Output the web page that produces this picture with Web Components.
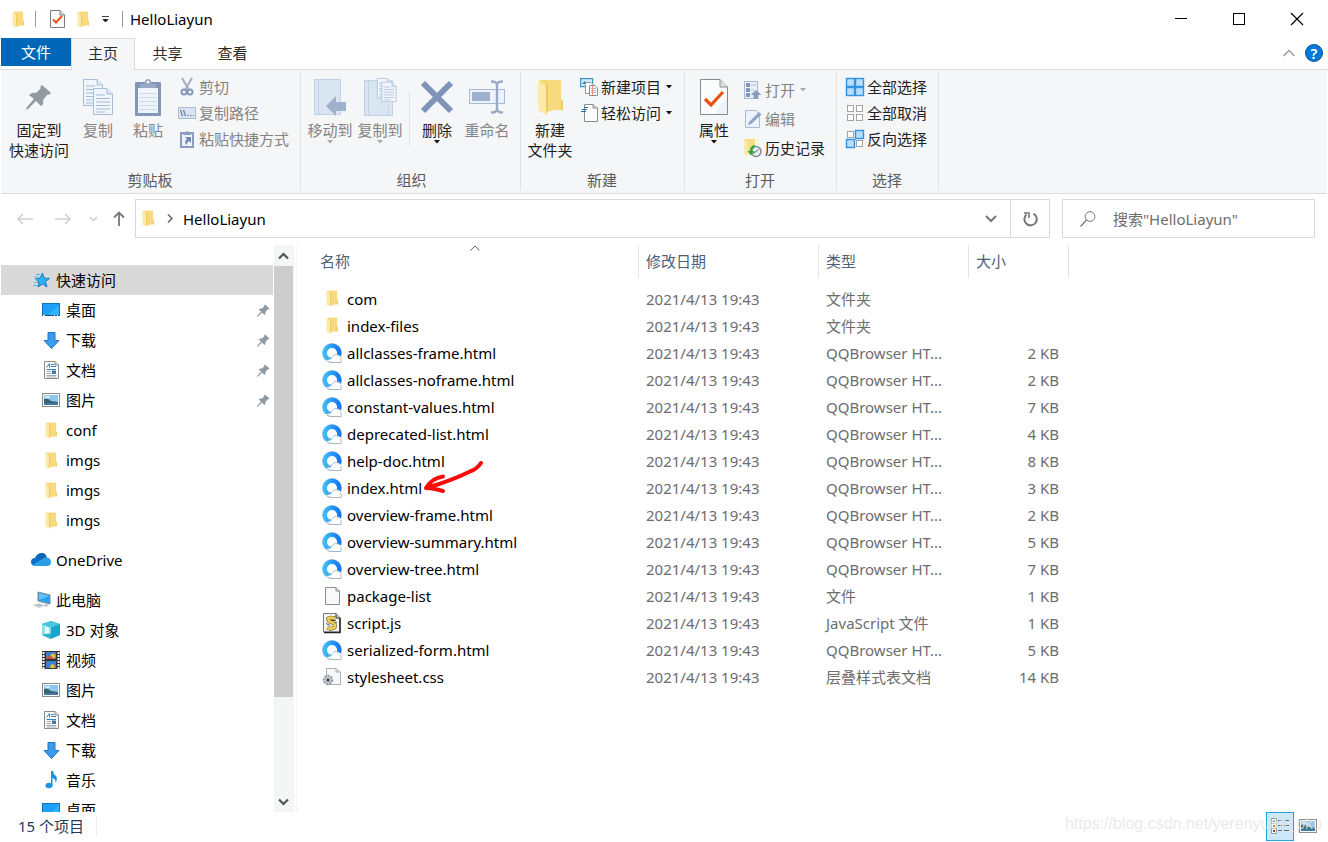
<!DOCTYPE html>
<html lang="zh-CN">
<head>
<meta charset="utf-8">
<title>HelloLiayun</title>
<style>
  html, body { margin: 0; height: 100%; background: #fff; }
  body { font: 15px/20px "Noto Sans", "Noto Sans CJK SC", sans-serif; color: #000; overflow: hidden; }
</style>
</head>
<body>
<explorer-window></explorer-window>

<script>
const folder = (w, h) => `<svg width="${w}" height="${h}" viewBox="0 0 26 36"><path d="M3 1H24V27H25V31H3Z" fill="#f7d774"/><path d="M11 1H24V29L11 33Z" fill="#f8da7e"/><path d="M1 1L9 7V36L1 31Z" fill="#fde9a9"/><path d="M9 7L11 5V31L9 36Z" fill="#eec75c"/><path d="M24 20L26 22V31H24Z" fill="#f2cd66"/></svg>`;
const tri = c => `<svg width="8" height="4" viewBox="0 0 8 4"><path d="M1 0H7L4 3.6Z" fill="${c}"/></svg>`;
const pin = s => `<svg width="${s}" height="${s}" viewBox="0 0 26 26"><path d="M16 1L25 9L23 11L22 10L17 16Q18 20 15 22L10 17L2 25L0 26L1 23L8 15L3 11Q6 8 10 9L15 4L14 3Z" fill="#8f9aa2"/></svg>`;
const sheet = (x, y) => `<g transform="translate(${x} ${y})"><path d="M.5 .5H14L19.5 6V26.500H.5Z" fill="#f1f6fc" stroke="#a9bdd8"/><path d="M14 .5V6H19.5" fill="#dbe6f4" stroke="#a9bdd8"/><path d="M3 7H12M3 10.500H17M3 14H17M3 17.500H17M3 21H17M3 24H12" stroke="#a5b9d4"/></g>`;
const cell = (x, y, on) => on
  ? `<rect x="${x + .5}" y="${y + .5}" width="8" height="8" fill="#b9def9" stroke="#2f93e3" stroke-width="1.4"/>`
  : `<rect x="${x + 1.5}" y="${y + 1.5}" width="6" height="6" fill="#fff" stroke="#a3a3a3"/>`;
const grid = s => `<svg width="18" height="18" viewBox="0 0 18 18">${cell(0, 0, s[0])}${cell(9, 0, s[1])}${cell(0, 9, s[2])}${cell(9, 9, s[3])}</svg>`;

const ICONS = {
  folder: folder(12, 17),
  folderBig: folder(26, 36),
  pinBig: pin(26),
  pin: pin(13),
  caret: tri('#111'),
  caretOff: tri('#a9a9a9'),
  props: `<svg width="15" height="18" viewBox="0 0 15 18"><path d="M.5 .5H10L14.500 5V17.500H.5Z" fill="#f8f9fb" stroke="#7d7d7d"/><path d="M10 .5V5H14.500" fill="#ddd" stroke="#7d7d7d"/><path d="M3 9.500L6 12.500L12 6" fill="none" stroke="#e8510f" stroke-width="2"/></svg>`,
  propsBig: `<svg width="28" height="36" viewBox="0 0 28 36"><path d="M.5 .5H20L27.500 8V35.500H.5Z" fill="#fbfcfe" stroke="#8a8a8a"/><path d="M20 .5V8H27.500" fill="#e1e1e1" stroke="#8a8a8a"/><path d="M14 35L27 19V35Z" fill="#eef3f9"/><path d="M5 20L11 26L23 13" fill="none" stroke="#e8510f" stroke-width="3.200"/></svg>`,
  custom: `<svg width="9" height="7" viewBox="0 0 9 7"><path d="M1 .5H8M2 3.500H7L4.500 6Z" fill="#111" stroke="#111" stroke-width=".8"/></svg>`,
  min: `<svg width="12" height="12" viewBox="0 0 12 12"><path d="M0 5.500H12" stroke="#000"/></svg>`,
  max: `<svg width="12" height="12" viewBox="0 0 12 12"><rect x=".5" y=".5" width="11" height="11" fill="none" stroke="#000"/></svg>`,
  close: `<svg width="12" height="12" viewBox="0 0 12 12"><path d="M0 0L12 12M12 0L0 12" stroke="#000" stroke-width="1.200"/></svg>`,
  collapse: `<svg width="12" height="8" viewBox="0 0 12 8"><path d="M.5 7L6 1.500L11.500 7" fill="none" stroke="#999" stroke-width="1.300"/></svg>`,
  copy: `<svg width="30" height="36" viewBox="0 0 30 36">${sheet(0, 0)}${sheet(10, 9)}</svg>`,
  paste: `<svg width="26" height="37" viewBox="0 0 26 37"><rect y="3" width="26" height="34" rx="1" fill="#8396ba"/><path d="M3 9H23V34H3Z" fill="#eff4fb"/><path d="M4 14.500H22M4 18.500H22M4 22.500H22M4 26.500H22M4 30.500H22" stroke="#cfdbeb"/><path d="M5 9V5H9Q10 0 13 0Q16 0 17 5H21V9Z" fill="#9aa9c3"/><circle cx="13" cy="3" r="1.300" fill="#fff"/></svg>`,
  cut: `<svg width="18" height="18" viewBox="0 0 18 18"><path d="M4 0L11 12M14 0L7 12" stroke="#a2adbf" stroke-width="2"/><circle cx="6" cy="14" r="2.500" fill="none" stroke="#8496b8" stroke-width="2"/><circle cx="12" cy="14" r="2.500" fill="none" stroke="#8496b8" stroke-width="2"/></svg>`,
  copyPath: `<svg width="18" height="12" viewBox="0 0 18 12"><rect x=".5" y=".5" width="17" height="11" fill="#d8e4f2" stroke="#aabbd2"/><path d="M2.500 3L4.500 9M5.500 3L7.500 9M9 8.500H10.500M12 8.500H13.500M15 8.500H16" stroke="#687f9f" stroke-width="1.200"/></svg>`,
  shortcut: `<svg width="14" height="18" viewBox="0 0 14 18"><rect x="1" y="3" width="12" height="14" fill="#eef3fa" stroke="#8a9dc0" stroke-width="2"/><path d="M3 5V3H5Q7-1 9 3H11V5Z" fill="#8a9dc0"/><path d="M5 7H11V13L9 11Q7 12 6.500 15Q3.500 12 7 9Z" fill="#7389b2"/></svg>`,
  moveTo: `<svg width="32" height="37" viewBox="0 0 32 37"><rect x=".5" y=".5" width="26" height="35" fill="#dae5f2" stroke="#c2d2e6"/><path d="M4.500 1V35" stroke="#c2d2e6"/><path d="M12 27L22 17V23H32V32H22V37Z" fill="#a0b1cc"/></svg>`,
  copyTo: `<svg width="33" height="38" viewBox="0 0 33 38"><rect x=".5" y="2.500" width="28" height="35" fill="#dae5f2" stroke="#c2d2e6"/><path d="M4.500 3V37M24.500 37V28" stroke="#c2d2e6"/><g transform="translate(13 0) scale(.75)">${sheet(0, 0)}${sheet(6, 5)}</g></svg>`,
  del: `<svg width="32" height="32" viewBox="0 0 32 32"><path d="M2 2L30 30M30 2L2 30" stroke="#8093b8" stroke-width="6"/></svg>`,
  rename: `<svg width="36" height="34" viewBox="0 0 36 34"><rect x=".5" y="9.500" width="35" height="14" fill="#edf3fb" stroke="#a7b9d3"/><rect x="3" y="12" width="18" height="9" fill="#a0b1ce"/><path d="M22 1.500Q28 1.500 28 5V29Q28 32.500 22 32.500M34 1.500Q28 1.500 28 5M28 29Q28 32.500 34 32.500" fill="none" stroke="#98aac9" stroke-width="2.400"/></svg>`,
  newItem: `<svg width="18" height="18" viewBox="0 0 18 18"><rect x=".6" y=".6" width="12" height="8" fill="#cfeaf8" stroke="#4493bd" stroke-width="1.200"/><path d="M2 6L5 3L7 6Z" fill="#39779b"/><path d="M5.500 4.500H11L13.500 7V15.500H5.500Z" fill="#fff" stroke="#999"/><path d="M9.500 7.500H15L17.500 10V17.500H9.500Z" fill="#fff" stroke="#8c8c8c"/><path d="M11 10.500H16M11 12.500H16M11 14.500H16" stroke="#a3b7cb"/><path d="M12.500 8V17" stroke="#ef8f7c"/></svg>`,
  easy: `<svg width="17" height="18" viewBox="0 0 17 18"><path d="M3.500 .5H12L16.500 4V17.500H3.500Z" fill="#fbfcfe" stroke="#8c8c8c"/><path d="M12 .5V4H16.500" fill="#ddd" stroke="#8c8c8c"/><path d="M3 3.500H7M1 5.500H6M0 7.500H5" stroke="#27719f" stroke-width="1.200"/></svg>`,
  open: `<svg width="18" height="18" viewBox="0 0 18 18"><rect x=".5" y=".5" width="13" height="17" fill="#e9f0f9" stroke="#a7b9d3"/><path d="M2.500 2.500H5.500V5.500H2.500ZM2.500 7.500H5.500V10.500H2.500ZM2.500 12.500H5.500V15.500H2.500Z" fill="#7f94ba" stroke="#7f94ba"/><path d="M7 4H12M7 9H10" stroke="#a9b9d1"/><path d="M12 9L17.500 14H14.500V18H9.500V14H6.500Z" fill="#8a9dbf"/></svg>`,
  edit: `<svg width="17" height="18" viewBox="0 0 17 18"><path d="M.5 .5H11L14.500 4V17.500H.5Z" fill="#edf3fa" stroke="#a7b9d3"/><path d="M3 15L4 12L14 2L16.500 4.500L6 14Z" fill="#8fa3c5"/></svg>`,
  history: `<svg width="18" height="18" viewBox="0 0 18 18"><path d="M0 0H11V15H0Z" fill="#f8dc82"/><path d="M0 0L4 3V18L0 15Z" fill="#fdeaae"/><circle cx="12" cy="12.500" r="5" fill="#e9eef0" stroke="#858c8d" stroke-width="1.500"/><path d="M9 14.500L12 12.500L14.500 10.500" stroke="#666" fill="none"/><path d="M11 6Q6 6.500 6 12H3.500L7 16.500L10.500 12H8.500Q9 8.500 11 8.500Z" fill="#2fa84a"/></svg>`,
  selAll: grid([1, 1, 1, 1]), selNone: grid([0, 0, 0, 0]), selInv: grid([0, 1, 1, 0]),
  back: `<svg width="16" height="12" viewBox="0 0 16 12"><path d="M1 6H16M6 1L1 6L6 11" fill="none" stroke="#cfcfcf" stroke-width="1.500"/></svg>`,
  fwd: `<svg width="16" height="12" viewBox="0 0 16 12"><path d="M0 6H15M10 1L15 6L10 11" fill="none" stroke="#cfcfcf" stroke-width="1.500"/></svg>`,
  recent: `<svg width="9" height="6" viewBox="0 0 9 6"><path d="M1 1L4.500 4.500L8 1" fill="none" stroke="#cfcfcf" stroke-width="1.500"/></svg>`,
  up: `<svg width="12" height="15" viewBox="0 0 12 15"><path d="M6 15V1.500M1 6.500L6 1.500L11 6.500" fill="none" stroke="#777" stroke-width="1.800"/></svg>`,
  crumb: `<svg width="6" height="9" viewBox="0 0 6 9"><path d="M1 .5L5 4.500L1 8.500" fill="none" stroke="#666" stroke-width="1.500"/></svg>`,
  down: `<svg width="12" height="8" viewBox="0 0 12 8"><path d="M1 1L6 6L11 1" fill="none" stroke="#777" stroke-width="2"/></svg>`,
  refresh: `<svg width="15" height="16" viewBox="0 0 15 16"><path d="M10.500 2.700A6.200 6.200 0 1 1 3.500 3.500" fill="none" stroke="#777" stroke-width="2"/><path d="M1 2H6V7" fill="none" stroke="#777" stroke-width="1.600"/></svg>`,
  search: `<svg width="16" height="16" viewBox="0 0 16 16"><circle cx="10" cy="5.500" r="4.900" fill="none" stroke="#777"/><path d="M6.500 9L.5 15.500" stroke="#777" stroke-width="1.200"/></svg>`,
  star: `<svg width="20" height="18" viewBox="0 0 20 18"><path d="M11.500 2L13 7L18.500 7.500L14.500 10.500L16 16L11.500 13L7 16L8 11L4.500 8L9 7Z" fill="#2fb1f2" stroke="#1679c4"/><path d="M5 3.500H9M3 6H7M4 8.500H6M3 11.500H7M2 14.500H6" stroke="#4db5ee"/></svg>`,
  cloud: `<svg width="20" height="14" viewBox="0 0 20 14"><path d="M4 5Q6 0 11 0Q15 0 16 5L12 9L4 7Z" fill="#0a66b7"/><path d="M4 13Q0 12 0 9Q0 5 4 5Q7 4 10 8L8 13Z" fill="#0f6fc6"/><path d="M15 4Q20 5 20 9Q20 13 16 13H5Q1 13 3 11L12 5.500Q13 4 15 4Z" fill="#2a9fe8"/></svg>`,
  pc: `<svg width="20" height="18" viewBox="0 0 20 18"><path d="M7 1L19 4V13L7 10Z" fill="#2aa2ef" stroke="#7d8a94"/><path d="M8 2L18 5L8 9Z" fill="#67c1f6"/><path d="M1 14L8 12L15 14.500L8 17Z" fill="#d4dadf"/><path d="M3 14.500L8 13L12 14.500L8 16Z" fill="#b9c2c9"/><path d="M13 13L18 14L15 16Z" fill="#b1bac0"/></svg>`,
  desktop: `<svg width="18" height="14" viewBox="0 0 18 14"><rect x=".5" y=".5" width="17" height="12" fill="#1ba1f7" stroke="#0d75c0"/><path d="M6 12L17 2V12Z" fill="#35b0fa"/><path d="M0 12.500H18" stroke="#09558f"/><path d="M1 12.500H3M12 12.500H13M15 12.500H16" stroke="#fff"/></svg>`,
  download: `<svg width="17" height="17" viewBox="0 0 17 17"><path d="M5 .5H12V8.500H16L8.500 16.500L1 8.500H5Z" fill="#3b9bea" stroke="#1f77c4"/></svg>`,
  doc: `<svg width="15" height="18" viewBox="0 0 15 18"><path d="M.5 .5H11L14.500 4V17.500H.5Z" fill="#fdfdfd" stroke="#8b8b8b"/><path d="M11 .5V4H14.500" fill="#ddd" stroke="#8b8b8b"/><path d="M2.500 6.500L5.500 2.500V6.500M7 3.500H10M7 5.500H12M2.500 8.500H12" fill="none" stroke="#2a84c8"/><path d="M2.500 10.500H7M2.500 12.500H7M2.500 14.500H12.500M2.500 16H12.500" stroke="#a2aab2"/><rect x="8" y="9.500" width="4" height="3.500" fill="#3b79a8"/></svg>`,
  picture: `<svg width="18" height="14" viewBox="0 0 18 14"><rect x=".5" y=".5" width="17" height="13" fill="#fff" stroke="#8d8d8d"/><rect x="2" y="2" width="14" height="10" fill="#8dc6ee"/><path d="M2 6Q6 5 9 8L16 9V12H2Z" fill="#39636b"/><path d="M2 10H16V12H2Z" fill="#3e78a8"/><path d="M3 4H8" stroke="#e9f6fd" stroke-width="1.500"/></svg>`,
  cube: `<svg width="18" height="18" viewBox="0 0 18 18"><path d="M9 0L18 3V14L9 18L0 14V3Z" fill="#18a5cf"/><path d="M9 6.500L0 3V14L9 18Z" fill="#8fe0ee"/><path d="M3 5L7 6.500V14L3 13Z" fill="#e6fafd"/><path d="M3 13L9 12.500V18L0 14Z" fill="#2db4cd"/><path d="M9 0L18 3L9 6.500L0 3Z" fill="#4cc6de"/></svg>`,
  video: `<svg width="18" height="18" viewBox="0 0 18 18"><rect width="18" height="18" fill="#333"/><path d="M1.500 1V18M16.500 1V18" stroke="#fff" stroke-width="2" stroke-dasharray="2 1"/><rect x="4" y="1" width="10" height="7" fill="#3a7fd6"/><rect x="4" y="10" width="10" height="7" fill="#3a7fd6"/><circle cx="11" cy="5" r="2.500" fill="#e8bb36"/><path d="M4 6L9 5L12 8H4Z" fill="#cc5338"/><path d="M8 17Q8 13 11 13Q13 14 13 17Z" fill="#e8bb36"/></svg>`,
  music: `<svg width="13" height="18" viewBox="0 0 13 18"><ellipse cx="4" cy="14.500" rx="3.500" ry="2.800" fill="#1795ec"/><path d="M6 15V0H8Q8 3 11 5Q13 8 10.500 12Q11 8 7.500 7V15Z" fill="#1795ec"/></svg>`,
  qq: `<svg width="20" height="20" viewBox="0 0 20 20"><defs><linearGradient id="g" x1="0" x2="1"><stop offset="0" stop-color="#3cbcf6"/><stop offset="1" stop-color="#1478f2"/></linearGradient></defs><circle cx="10" cy="10" r="9.600" fill="#fff" stroke="#b3c6da" stroke-width=".8"/><circle cx="10" cy="10" r="7.300" fill="#fff" stroke="url(#g)" stroke-width="4.400"/><path d="M4 17Q8 17.500 10.500 14.500Q12 11.500 14.500 11.500Q18 11.500 19.500 15V19.500H9Q5.500 19 4 17Z" fill="#fff"/><path d="M6 15Q9 15.500 10.500 13.500Q12 11 14.500 11.500Q16 12 16.500 13.500" fill="none" stroke="#9fb4cc" stroke-width=".9"/><path d="M5 18Q8 19.500 10 19.500H19Q20 17.500 18.500 15" fill="none" stroke="#9dafc5" stroke-width=".9"/></svg>`,
  file: `<svg width="15" height="18" viewBox="0 0 15 18"><path d="M.5 .5H11L14.500 4V17.500H.5Z" fill="#f7f9fb" stroke="#8b8b8b"/><path d="M11 .5V4H14.500" fill="#ddd" stroke="#8b8b8b"/></svg>`,
  js: `<svg width="18" height="20" viewBox="0 0 18 20"><path d="M.5 .5H13L17 4.500V19H.5Z" fill="#f6f6f4" stroke="#777"/><path d="M17 5V19.500H1" fill="none" stroke="#222" stroke-width="1.500"/><path d="M13 .5V5H17" fill="#ccc" stroke="#333"/><path d="M12.500 5.500Q6 3.500 5 6Q5 8.500 9 9.500Q13 11 11.500 14.500Q8 16.500 4 15" fill="none" stroke="#716129" stroke-width="4"/><path d="M12.500 5.500Q6 3.500 5 6Q5 8.500 9 9.500Q13 11 11.500 14.500Q8 16.500 4 15" fill="none" stroke="#edcf58" stroke-width="2.800"/><path d="M8 7.500H13M3 10.500L7 12.500M12 9.500H14" stroke="#333" stroke-width=".8"/></svg>`,
  css: `<svg width="18" height="18" viewBox="0 0 18 18"><path d="M3.500 .5H13L17.500 4V16.500H3.500Z" fill="#f5f7f9" stroke="#b0b0b0"/><path d="M13 .5V4H17.500" fill="#ddd" stroke="#b0b0b0"/><circle cx="5" cy="12" r="4.300" fill="#c0c6cb" stroke="#929aa1" stroke-width="1.800" stroke-dasharray="2 1.200"/><circle cx="5" cy="12" r="1.500" fill="#333c44"/></svg>`,
  sort: `<svg width="10" height="6" viewBox="0 0 10 6"><path d="M.5 5.500L5 1L9.500 5.500" fill="none" stroke="#666"/></svg>`,
  scrollUp: `<svg width="11" height="8" viewBox="0 0 11 8"><path d="M1 6.500L5.500 2L10 6.500" fill="none" stroke="#555" stroke-width="2.200"/></svg>`,
  scrollDown: `<svg width="11" height="8" viewBox="0 0 11 8"><path d="M1 1.500L5.500 6L10 1.500" fill="none" stroke="#555" stroke-width="2.200"/></svg>`,
  details: `<svg width="18" height="16" viewBox="0 0 18 16"><path d="M.5 .5H5.500V15.500H.5ZM.5 5.500H5.500M.5 10.500H5.500" fill="#fff" stroke="#999"/><path d="M2 3H4" stroke="#2f6fa8" stroke-width="2"/><path d="M2 8H4" stroke="#c6922c" stroke-width="2"/><path d="M2 13H4" stroke="#b5342a" stroke-width="2"/><path d="M7 2.500H11M13 2.500H18M7 7.500H11M13 7.500H18M7 12.500H11M13 12.500H18" stroke="#666"/></svg>`,
  mark: `<svg width="60" height="34" viewBox="0 0 60 34"><path d="M58 3Q54 9 48 11Q28 21 3 28Q9 18 20 16.500M3 28Q10 28 20 31" fill="none" stroke="#fb0a0a" stroke-width="4" stroke-linecap="round" stroke-linejoin="round"/></svg>`
};

const define = (name, css, render) => customElements.define(name, class extends HTMLElement {
  connectedCallback() {
    if (this.shadowRoot) return;
    const t = document.createElement('template');
    t.innerHTML = `<style>*{box-sizing:border-box}button{font:inherit;color:inherit;background:none;border:0;margin:0;padding:0;display:flex;align-items:center;justify-content:center}a{color:inherit;text-decoration:none}${css}</style>${render(this)}`;
    this.attachShadow({ mode: 'open' }).append(t.content.cloneNode(true));
  }
});
const icon = n => `<ui-icon name="${n}"></ui-icon>`;

define('ui-icon', `:host{display:inline-flex;flex:none;align-items:center;justify-content:center}svg{display:block;overflow:visible}`,
  el => ICONS[el.getAttribute('name')]);

define('title-bar', `
  :host{display:flex;align-items:center;height:38px;padding:0 2px 0 12px}
  .sep{width:1px;height:16px;background:#999}
  .quick{display:flex;align-items:center;gap:12px}
  .quick .sep{margin:0 2px 0 -1px}
  h1{font:inherit;margin:0 0 0 7px;flex:1}
  .end{margin-left:12px}
  .win{width:58px;height:38px}`,
  () => `<div class="quick">${icon('folder')}<span class="sep"></span>
    <button aria-label="属性">${icon('props')}</button><button aria-label="新建文件夹">${icon('folder')}</button>
    <button aria-label="自定义快速访问工具栏">${icon('custom')}</button></div><span class="sep end"></span>
    <h1>HelloLiayun</h1>
    <button class="win" aria-label="最小化">${icon('min')}</button><button class="win" aria-label="最大化">${icon('max')}</button><button class="win" aria-label="关闭">${icon('close')}</button>`);

define('ribbon-tabs', `
  :host{display:flex;height:32px;padding:0 5px 0 1px;border-bottom:1px solid #dadbdc;color:#2b2b2b}
  button{width:65px;height:30px}
  .file{width:70px;height:28px;background:#0066b8;color:#fff}
  .on{width:64px;height:32px;background:#f5f6f7;border:1px solid #dadbdc;border-bottom:0;padding-bottom:3px}
  .space{flex:1}
  .tool{width:24px}
  .help{width:18px;height:18px;border-radius:9px;background:#0078d7;border:1px solid #0a569b;color:#fff;font-weight:600;line-height:16px;margin:6px 0 0 4px}`,
  () => `<button class="file">文件</button><button class="on">主页</button><button>共享</button><button>查看</button>
    <span class="space"></span><button class="tool" aria-label="最小化功能区">${icon('collapse')}</button><button class="help">?</button>`);

define('ribbon-button', `
  :host{display:block;flex:none;width:50px;color:#1e1e1e}
  :host([wide]){width:68px}
  :host([off]){color:#838383}
  button{flex-direction:column;width:100%;white-space:nowrap}
  .pic{height:42px;margin-bottom:2px}
  .arrow{height:4px}`,
  el => `<button ${el.hasAttribute('off') ? 'disabled' : ''}><ui-icon class="pic" name="${el.getAttribute('icon')}"></ui-icon><slot></slot>${
    el.hasAttribute('menu') ? `<ui-icon class="arrow" name="${el.hasAttribute('off') ? 'caretOff' : 'caret'}"></ui-icon>` : ''}</button>`);

define('ribbon-item', `
  :host{display:block;height:var(--row,26px);color:#1e1e1e}
  :host([off]){color:#838383}
  button{height:100%;white-space:nowrap}
  .pic{width:18px;margin-right:3px}
  .arrow{margin-left:4px}`,
  el => `<button ${el.hasAttribute('off') ? 'disabled' : ''}><ui-icon class="pic" name="${el.getAttribute('icon')}"></ui-icon><slot></slot>${
    el.hasAttribute('menu') ? `<ui-icon class="arrow" name="${el.hasAttribute('off') ? 'caretOff' : 'caret'}"></ui-icon>` : ''}</button>`);

define('ribbon-group', `
  :host{display:flex;flex-direction:column;flex:none;padding:4px 11px 0 4px;margin:2px 0 3px;border-right:1px solid #e1e2e4}
  :host([tight]){padding-right:8px}
  .body{display:flex;flex:1}
  ::slotted(.items){padding-left:5px}
  .name{text-align:center;color:#5a5a5a;padding-left:6px}`,
  el => `<div class="body"><slot></slot></div><div class="name">${el.getAttribute('label')}</div>`);

define('ribbon-bar', `
  :host{display:flex;height:124px;margin:0 1px;background:#f5f6f7;border-bottom:1px solid #dadbdc}
  .items{margin-top:-2px}
  .loose{--row:29px;padding-top:1px}
  .sep{width:1px;height:55px;background:#e1e2e4;margin:15px 2px 0 4px}`,
  () => `
  <ribbon-group label="剪贴板"><ribbon-button wide icon="pinBig"><span>固定到<br>快速访问</span></ribbon-button>
    <ribbon-button off icon="copy">复制</ribbon-button><ribbon-button off icon="paste">粘贴</ribbon-button>
    <div class="items"><ribbon-item off icon="cut">剪切</ribbon-item><ribbon-item off icon="copyPath">复制路径</ribbon-item><ribbon-item off icon="shortcut">粘贴快捷方式</ribbon-item></div></ribbon-group>
  <ribbon-group tight label="组织"><ribbon-button off menu icon="moveTo">移动到</ribbon-button><ribbon-button off menu icon="copyTo">复制到</ribbon-button>
    <span class="sep"></span><ribbon-button menu icon="del">删除</ribbon-button><ribbon-button off icon="rename">重命名</ribbon-button></ribbon-group>
  <ribbon-group label="新建"><ribbon-button icon="folderBig"><span>新建<br>文件夹</span></ribbon-button>
    <div class="items"><ribbon-item menu icon="newItem">新建项目</ribbon-item><ribbon-item menu icon="easy">轻松访问</ribbon-item></div></ribbon-group>
  <ribbon-group label="打开"><ribbon-button menu icon="propsBig">属性</ribbon-button>
    <div class="items loose"><ribbon-item off menu icon="open">打开</ribbon-item><ribbon-item off icon="edit">编辑</ribbon-item><ribbon-item icon="history">历史记录</ribbon-item></div></ribbon-group>
  <ribbon-group label="选择"><div class="items"><ribbon-item icon="selAll">全部选择</ribbon-item><ribbon-item icon="selNone">全部取消</ribbon-item><ribbon-item icon="selInv">反向选择</ribbon-item></div></ribbon-group>`);

define('address-bar', `
  :host{display:flex;align-items:center;height:51px;padding:0 13px 2px 17px}
  .nav{display:flex;align-items:center;gap:22px;width:118px}
  .nav .tight{margin:0 -7px 0 -4px}
  .path{display:flex;align-items:center;flex:1;height:39px;border:1px solid #d9d9d9;padding-left:6px}
  .crumb{margin:0 10px 0 13px}
  .name{flex:1;justify-content:flex-start}
  .box{width:39px;height:37px}
  .refresh{border-left:1px solid #d9d9d9}
  label{display:flex;align-items:center;width:253px;height:39px;border:1px solid #d9d9d9;margin-left:12px;padding-left:17px;gap:17px}
  input{font:inherit;border:0;outline:0;padding:0;min-width:0;flex:1;background:none;color:#000}
  input::placeholder{color:#6d6d6d;opacity:1}`,
  () => `<div class="nav"><button aria-label="后退">${icon('back')}</button><button aria-label="前进">${icon('fwd')}</button><button class="tight" aria-label="最近浏览的位置">${icon('recent')}</button><button aria-label="向上">${icon('up')}</button></div>
    <div class="path">${icon('folder')}<ui-icon class="crumb" name="crumb"></ui-icon><button class="name">HelloLiayun</button>
    <button class="box" aria-label="以前的位置">${icon('down')}</button><button class="box refresh" aria-label="刷新">${icon('refresh')}</button></div>
    <label>${icon('search')}<input type="text" aria-label="搜索" placeholder='搜索"HelloLiayun"'></label>`);

define('nav-item', `
  :host{display:block}
  :host([gap]){margin-top:10px}
  a{display:flex;align-items:center;height:30px;padding:0 3px 0 40px}
  :host([root]) a{padding-left:30px}
  :host([on]) a{background:#d9d9d9}
  .pic{width:20px;margin-right:5px}
  .name{flex:1}`,
  el => `<a href="#"><ui-icon class="pic" name="${el.getAttribute('icon')}"></ui-icon><span class="name"><slot></slot></span>${el.hasAttribute('pinned') ? icon('pin') : ''}</a>`);

define('nav-tree', `
  :host{display:flex;width:297px;flex:none;padding-left:1px;border-right:1px solid #f3f3f5;min-height:0}
  nav{flex:1;overflow:hidden;padding-top:20px}
  .bar{display:flex;flex-direction:column;width:20px;margin:0 2px 0 1px;background:#f4f5f7}
  .bar button{height:21px;width:19px}
  .track{flex:1}
  .thumb{width:19px;height:82%;background:#cdcdcd}`,
  () => `<nav><nav-item root on icon="star">快速访问</nav-item>
    <nav-item pinned icon="desktop">桌面</nav-item><nav-item pinned icon="download">下载</nav-item><nav-item pinned icon="doc">文档</nav-item><nav-item pinned icon="picture">图片</nav-item>
    <nav-item icon="folder">conf</nav-item><nav-item icon="folder">imgs</nav-item><nav-item icon="folder">imgs</nav-item><nav-item icon="folder">imgs</nav-item>
    <nav-item root gap icon="cloud">OneDrive</nav-item><nav-item root gap icon="pc">此电脑</nav-item>
    <nav-item icon="cube">3D 对象</nav-item><nav-item icon="video">视频</nav-item><nav-item icon="picture">图片</nav-item><nav-item icon="doc">文档</nav-item><nav-item icon="download">下载</nav-item><nav-item icon="music">音乐</nav-item><nav-item icon="desktop">桌面</nav-item></nav>
    <div class="bar"><button aria-label="向上滚动">${icon('scrollUp')}</button><div class="track"><div class="thumb"></div></div><button aria-label="向下滚动">${icon('scrollDown')}</button></div>`);

const html = (n, s) => ['qq', n + '.html', 'QQBrowser HT...', s];
const FILES = [
  ['folder', 'com', '文件夹', ''], ['folder', 'index-files', '文件夹', ''],
  html('allclasses-frame', 2), html('allclasses-noframe', 2), html('constant-values', 7), html('deprecated-list', 4),
  html('help-doc', 8), html('index', 3), html('overview-frame', 2), html('overview-summary', 5), html('overview-tree', 7),
  ['file', 'package-list', '文件', 1], ['js', 'script.js', 'JavaScript 文件', 1], html('serialized-form', 5), ['css', 'stylesheet.css', '层叠样式表文档', 14]
];

define('file-list', `
  :host{display:block;flex:1;min-width:0;overflow:hidden}
  table{border-collapse:collapse;table-layout:fixed;width:772px}
  .c1{width:342px}.c2{width:180px}.c3{width:150px}.c4{width:100px}
  th{font-weight:400;text-align:left;padding:0 0 7px;color:#4c607a}
  th div{position:relative;height:33px;line-height:33px;padding-left:7px;border-right:1px solid #e3e3e3}
  th:first-child div{padding-left:23px}
  .sort{position:absolute;top:0;left:173px}
  td{height:27px;padding:0 0 0 7px;color:#6d6d6d;white-space:nowrap}
  td:first-child{padding-left:25px;color:#000}
  td:last-child{text-align:right;padding-right:10px}
  .file{display:flex;align-items:center;position:relative}
  .pic{width:20px;height:20px;margin-right:5px}
  .mark{position:absolute;left:101px;top:-18px}`,
  () => `<table><colgroup><col class="c1"><col class="c2"><col class="c3"><col class="c4"></colgroup>
    <thead><tr><th><div>名称<ui-icon class="sort" name="sort"></ui-icon></div></th><th><div>修改日期</div></th><th><div>类型</div></th><th><div>大小</div></th></tr></thead>
    <tbody>${FILES.map(([i, n, t, s]) => `<tr><td><div class="file"><ui-icon class="pic" name="${i}"></ui-icon>${n}${n === 'index.html' ? '<ui-icon class="mark" name="mark"></ui-icon>' : ''}</div></td><td>2021/4/13 19:43</td><td>${t}</td><td>${s && s + ' KB'}</td></tr>`).join('')}</tbody></table>`);

define('status-bar', `
  :host{display:flex;align-items:center;height:30px;padding:0 6px 2px 18px;position:relative;color:#1e395b}
  .count{flex:1}
  .count span{padding-right:12px;border-right:1px solid #eee}
  button{width:28px;height:29px}
  .on{background:#cce8f8;border:1px solid #26a0da}
  .url{position:absolute;right:6px;top:2px;font:16px/20px "Liberation Sans",sans-serif;color:#e4e4e4cc}`,
  () => `<div class="count"><span>15 个项目</span></div><button class="on" aria-label="详细信息">${icon('details')}</button><button aria-label="大缩略图">${icon('picture')}</button>
    <span class="url">https://blog.csdn.net/yerenyuan_pku</span>`);

define('explorer-window', `
  :host{display:flex;flex-direction:column;height:100vh}
  title-bar,ribbon-tabs,ribbon-bar,address-bar,status-bar{flex:none}
  main{display:flex;flex:1;min-height:0}`,
  () => `<title-bar></title-bar><ribbon-tabs></ribbon-tabs><ribbon-bar></ribbon-bar><address-bar></address-bar>
    <main><nav-tree></nav-tree><file-list></file-list></main><status-bar></status-bar>`);
</script>
</body>
</html>
